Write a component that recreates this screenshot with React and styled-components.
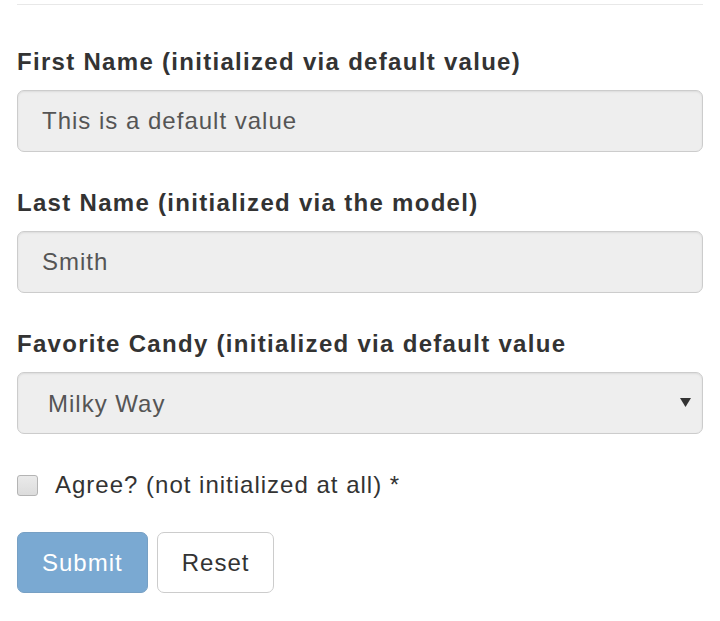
import React from "react";
import styled, { createGlobalStyle } from "styled-components";

const Global = createGlobalStyle`
  html, body { margin: 0; padding: 0; background: #fff; }
  body { font-family: "Liberation Sans", Arial, sans-serif; }
  * { box-sizing: border-box; }
`;

const Page = styled.div`
  padding: 4px 17px 0;
`;

const Rule = styled.hr`
  margin: 0;
  border: 0;
  border-top: 1px solid #e8e8e8;
`;

const Form = styled.form`
  padding-top: 39px;
`;

const Group = styled.div`
  margin-bottom: 33px;
`;

const Label = styled.label`
  display: block;
  font-size: 24px;
  line-height: 36px;
  font-weight: 700;
  letter-spacing: 1.3px;
  color: #333;
  margin-bottom: 10px;
`;

const fieldBase = `
  display: block;
  width: 100%;
  height: 62px;
  margin: 0;
  font-family: "Liberation Sans", Arial, sans-serif;
  font-size: 24px;
  letter-spacing: 1px;
  color: #555;
  background: #eee;
  border: 1px solid #ccc;
  border-radius: 7px;
  box-shadow: inset 0 1px 2px rgba(0, 0, 0, 0.08);
  outline: none;
`;

const TextInput = styled.input`
  ${fieldBase}
  padding: 0 24px;
`;

const SelectWrap = styled.div`
  position: relative;
`;

const Select = styled.select`
  ${fieldBase}
  padding: 0 40px 0 30px;
  appearance: none;
  -webkit-appearance: none;
`;

const Arrow = styled.svg`
  position: absolute;
  right: 12px;
  top: 50%;
  margin-top: -5px;
  width: 11px;
  height: 9px;
  pointer-events: none;
`;

const CheckRow = styled.label`
  display: flex;
  align-items: center;
  gap: 17px;
  height: 36px;
  font-size: 24px;
  letter-spacing: 1px;
  color: #333;
`;

const Check = styled.input`
  appearance: none;
  -webkit-appearance: none;
  margin: 0;
  width: 21px;
  height: 21px;
  border: 1px solid #b4b4b4;
  border-radius: 3px;
  background: linear-gradient(#eaeaea, #dcdcdc);
`;

const Buttons = styled.div`
  display: flex;
  gap: 9px;
  margin-top: 29px;
`;

const Button = styled.button`
  height: 61px;
  padding: 0 24px;
  font-family: "Liberation Sans", Arial, sans-serif;
  font-size: 24px;
  letter-spacing: 1px;
  border-radius: 7px;
  border: 1px solid ${(p) => (p.$primary ? "rgb(119,160,196)" : "#ccc")};
  background: ${(p) => (p.$primary ? "rgb(122,169,210)" : "#fff")};
  color: ${(p) => (p.$primary ? "#fff" : "#333")};
`;

export default function App() {
  return (
    <>
      <Global />
      <Page>
        <Rule />
        <Form onSubmit={(e) => e.preventDefault()}>
          <Group>
            <Label>First Name (initialized via default value)</Label>
            <TextInput readOnly defaultValue="This is a default value" />
          </Group>
          <Group>
            <Label>Last Name (initialized via the model)</Label>
            <TextInput readOnly defaultValue="Smith" />
          </Group>
          <Group>
            <Label>Favorite Candy (initialized via default value</Label>
            <SelectWrap>
              <Select defaultValue="Milky Way">
                <option>Milky Way</option>
              </Select>
              <Arrow viewBox="0 0 11 9">
                <path d="M0 0 H11 L5.5 9 Z" fill="#333" />
              </Arrow>
            </SelectWrap>
          </Group>
          <CheckRow>
            <Check type="checkbox" />
            Agree? (not initialized at all) *
          </CheckRow>
          <Buttons>
            <Button $primary type="submit">Submit</Button>
            <Button type="reset">Reset</Button>
          </Buttons>
        </Form>
      </Page>
    </>
  );
}
